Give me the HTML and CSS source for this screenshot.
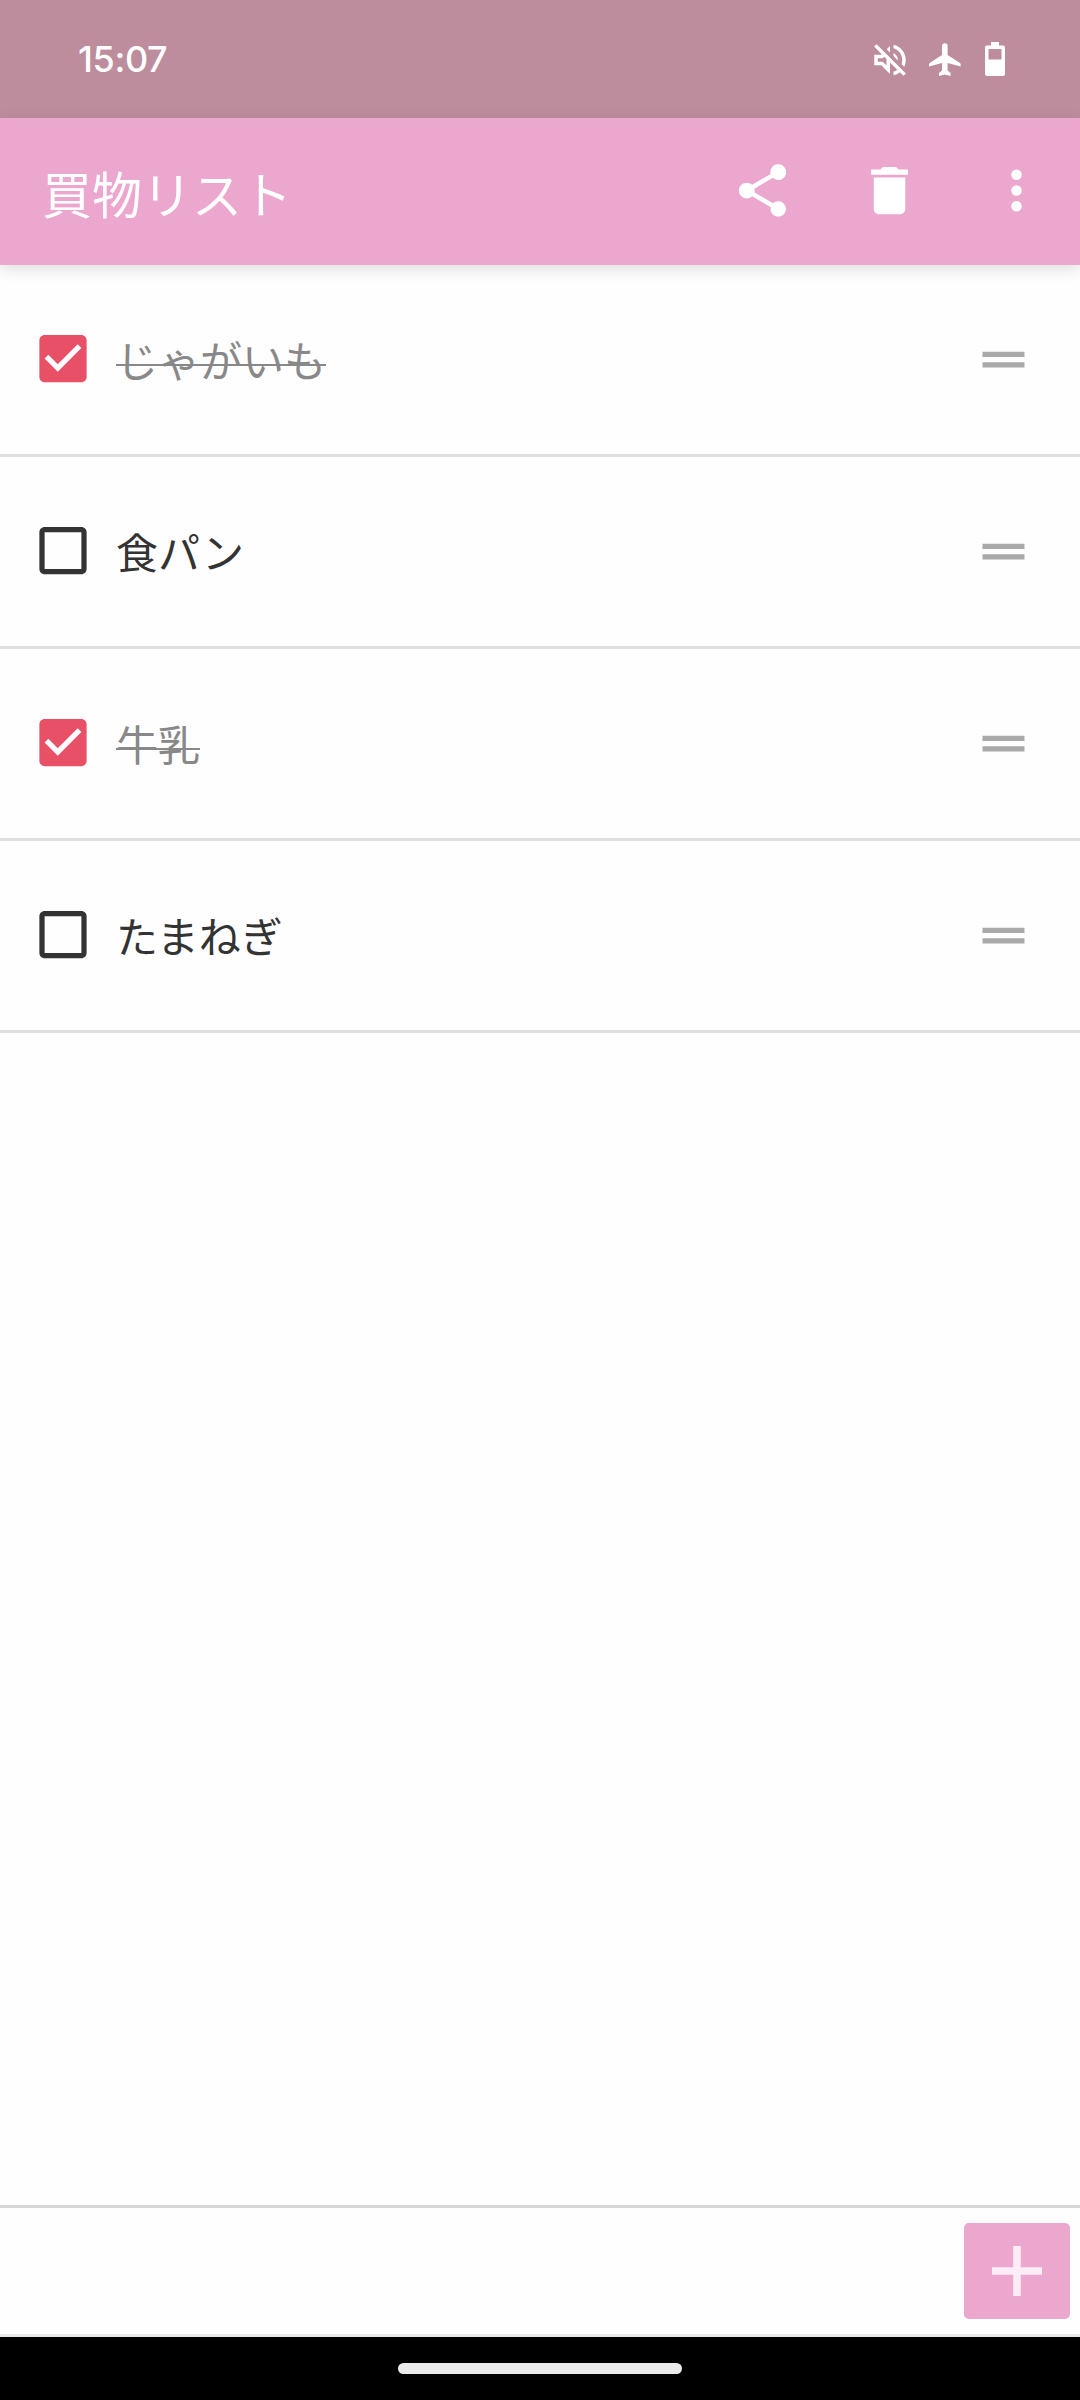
FILE: index.html
```html
<!DOCTYPE html>
<html lang="ja">
<head>
<meta charset="utf-8">
<title>買物リスト</title>
<link rel="stylesheet" href="styles.css">
</head>
<body>
<div class="screen">
  <div class="status-bar">
    <span class="clock">15:07</span>
    <svg class="mute" viewBox="0 0 24 24"><path d="M4.34 2.93L2.93 4.34 7.29 8.7 7 9H3v6h4l5 5v-6.59l4.18 4.18c-.65.49-1.38.88-2.18 1.11v2.06c1.34-.3 2.57-.92 3.61-1.75l2.05 2.05 1.41-1.41zM10 15.17L7.83 13H5v-2h2.83l.88-.88L10 11.41zM19 12c0 .82-.15 1.61-.41 2.34l1.53 1.53c.56-1.17.88-2.48.88-3.87 0-4.28-2.99-7.86-7-8.77v2.06c2.89.86 5 3.54 5 6.71zM12 4l-1.88 1.88L12 7.76zM16.5 12c0-1.77-1.02-3.29-2.5-4.03v1.79l2.48 2.48c.01-.08.02-.16.02-.24z"/></svg>
    <svg class="plane" viewBox="0 0 32 34"><path d="M13 3a2.8 2.8 0 0 1 5.6 0v9L31 20q.8.6.6 1.5V23.500L18.600 20v7.500l3 2.600v3L15.800 31.500 10 33.100v-3l3-2.600V20L0 23.500V21.500q0-.9.700-1.500L13 12z"/></svg>
    <svg class="battery" viewBox="0 0 20 34"><path fill-rule="evenodd" d="M6 0h8v3.500h4a2 2 0 0 1 2 2V32a2 2 0 0 1-2 2H2a2 2 0 0 1-2-2V5.500a2 2 0 0 1 2-2h4zM3.500 7v10.500h13V7z"/></svg>
  </div>
  <header class="app-bar">
    <h1 class="title">買物リスト</h1>
    <nav class="actions">
      <svg class="icon" viewBox="0 0 24 24"><path d="M18 16.080c-.760 0-1.440.3-1.960.770L8.910 12.700c.05-.23.09-.46.09-.7s-.04-.47-.09-.7l7.050-4.110c.54.5 1.250.810 2.040.810 1.660 0 3-1.340 3-3s-1.340-3-3-3-3 1.340-3 3c0 .24.04.47.09.7L8.040 9.810C7.500 9.310 6.790 9 6 9c-1.660 0-3 1.340-3 3s1.340 3 3 3c.79 0 1.500-.31 2.040-.81l7.120 4.160c-.05.21-.08.43-.08.65 0 1.610 1.310 2.920 2.920 2.920s2.920-1.310 2.920-2.920-1.310-2.920-2.920-2.920z"/></svg>
      <svg class="icon" viewBox="0 0 24 24"><path d="M6 19c0 1.100.9 2 2 2h8c1.100 0 2-.9 2-2V7H6zM19 4h-3.500l-1-1h-5l-1 1H5v2h14z"/></svg>
      <svg class="icon" viewBox="0 0 24 24"><circle cx="12" cy="6" r="2"/><circle cx="12" cy="12" r="2"/><circle cx="12" cy="18" r="2"/></svg>
    </nav>
  </header>
  <ul class="list">
    <li class="item done">
      <svg class="icon check" viewBox="0 0 24 24"><path d="M19 3H5c-1.110 0-2 .9-2 2v14c0 1.100.89 2 2 2h14c1.110 0 2-.9 2-2V5c0-1.100-.89-2-2-2zm-9 14l-5-5 1.410-1.410L10 14.170l7.590-7.590L19 8z"/></svg>
      <span class="label">じゃがいも</span>
      <svg class="icon handle" viewBox="0 0 24 24"><path d="M20 9H4v2h16zM4 15h16v-2H4z"/></svg>
    </li>
    <li class="item">
      <svg class="icon check" viewBox="0 0 24 24"><path d="M19 5v14H5V5h14m0-2H5c-1.100 0-2 .9-2 2v14c0 1.100.9 2 2 2h14c1.100 0 2-.9 2-2V5c0-1.100-.9-2-2-2z"/></svg>
      <span class="label">食パン</span>
      <svg class="icon handle" viewBox="0 0 24 24"><path d="M20 9H4v2h16zM4 15h16v-2H4z"/></svg>
    </li>
    <li class="item done">
      <svg class="icon check" viewBox="0 0 24 24"><path d="M19 3H5c-1.110 0-2 .9-2 2v14c0 1.100.89 2 2 2h14c1.110 0 2-.9 2-2V5c0-1.100-.89-2-2-2zm-9 14l-5-5 1.410-1.410L10 14.170l7.590-7.590L19 8z"/></svg>
      <span class="label">牛乳</span>
      <svg class="icon handle" viewBox="0 0 24 24"><path d="M20 9H4v2h16zM4 15h16v-2H4z"/></svg>
    </li>
    <li class="item">
      <svg class="icon check" viewBox="0 0 24 24"><path d="M19 5v14H5V5h14m0-2H5c-1.100 0-2 .9-2 2v14c0 1.100.9 2 2 2h14c1.100 0 2-.9 2-2V5c0-1.100-.9-2-2-2z"/></svg>
      <span class="label">たまねぎ</span>
      <svg class="icon handle" viewBox="0 0 24 24"><path d="M20 9H4v2h16zM4 15h16v-2H4z"/></svg>
    </li>
  </ul>
  <footer class="add-bar">
    <button class="add" aria-label="追加"><svg class="plus" viewBox="0 0 50 50"><path d="M21.200 0h7.600v21.200H50v7.600H28.800V50h-7.600V28.800H0v-7.600h21.200z"/></svg></button>
  </footer>
  <div class="nav-bar"><div class="pill"></div></div>
</div>
</body>
</html>
```

FILE: styles.css
```css
* {
  box-sizing: border-box;
}

body {
  margin: 0;
  font-family: "Noto Sans CJK JP", sans-serif;
  background: #fefefe;
}

svg {
  display: block;
  flex: none;
  fill: currentColor;
}

.screen {
  display: flex;
  flex-direction: column;
  width: 1080px;
  height: 2400px;
  overflow: hidden;
}

.status-bar {
  display: flex;
  align-items: flex-start;
  flex: none;
  height: 118px;
  padding: 0 75px 0 78px;
  background: #bd8d9e;
  color: #fff;
}

.clock {
  margin: 37px auto 0 0;
  font: 500 36px/44px Inter, sans-serif;
  letter-spacing: -0.4px;
}

.mute {
  width: 42px;
  height: 42px;
  margin: 39px 18px 0 0;
}

.plane {
  width: 32px;
  height: 34px;
  margin: 43px 24px 0 0;
}

.battery {
  width: 20px;
  height: 34px;
  margin-top: 42px;
}

.app-bar {
  display: flex;
  align-items: center;
  justify-content: space-between;
  flex: none;
  height: 147px;
  padding: 0 32px 0 42px;
  background: #eca7ce;
  color: #fff;
  box-shadow: 0 4px 14px rgba(0, 0, 0, 0.13);
}

.title {
  margin: 0;
  font-size: 50px;
  font-weight: 400;
  line-height: 70px;
}

.actions {
  display: flex;
  gap: 64px;
  margin-bottom: 2px;
}

.icon {
  width: 63px;
  height: 63px;
}

.list {
  flex: 1;
  margin: 0;
  padding: 0;
  list-style: none;
}

.item {
  display: flex;
  align-items: center;
  height: 192px;
  padding: 0 45px 1px 31px;
  border-bottom: 3px solid #dfdfdf;
  color: #333;
}

.check {
  margin-bottom: 1px;
  transform: translateX(0.5px);
}

.label {
  position: relative;
  margin: 0 auto 1px 22px;
  font-size: 42px;
  line-height: 62px;
}

.done .check {
  color: #e85068;
}

.done .label {
  color: #888;
}

.done .label::after {
  content: "";
  position: absolute;
  top: 36px;
  left: 0;
  right: 0;
  height: 2px;
  background: #888;
}

.handle {
  color: #a9a9a9;
}

.add-bar {
  display: flex;
  align-items: flex-start;
  justify-content: flex-end;
  flex: none;
  height: 132px;
  padding: 15px 10px 0;
  border-top: 3px solid #d6d6d6;
  border-bottom: 3px solid #e8e8e8;
}

.add {
  display: flex;
  align-items: center;
  justify-content: center;
  width: 106px;
  height: 96px;
  padding: 0;
  border: 0;
  border-radius: 5px;
  background: #eca7ce;
  color: #fcecf6;
}

.plus {
  width: 50px;
  height: 50px;
}

.nav-bar {
  display: flex;
  align-items: center;
  justify-content: center;
  flex: none;
  height: 63px;
  background: #000;
}

.pill {
  width: 284px;
  height: 11px;
  border-radius: 6px;
  background: #ebebeb;
}
```
